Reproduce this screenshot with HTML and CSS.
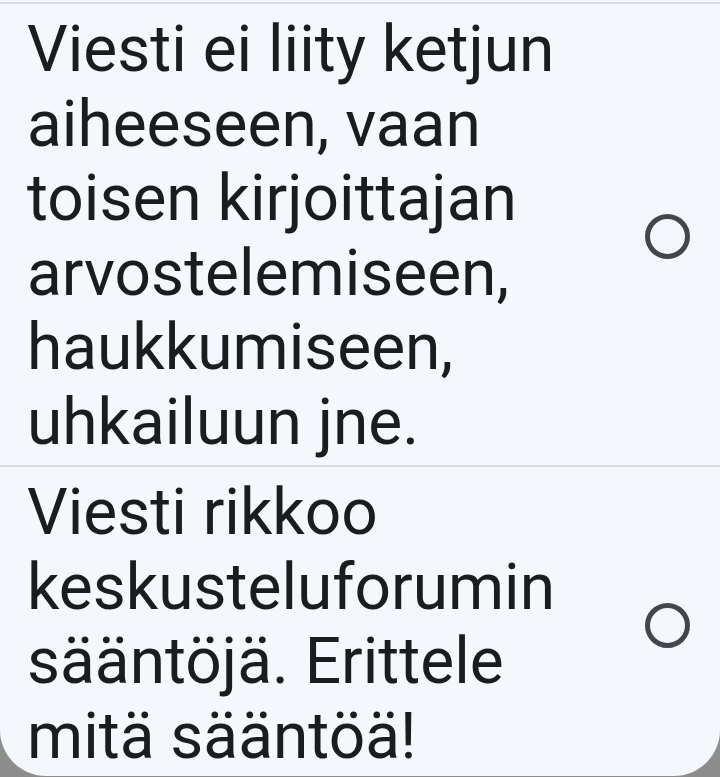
FILE: index.html
```html
<!DOCTYPE html>
<html lang="fi">
<head>
<meta charset="utf-8">
<link rel="stylesheet" href="styles.css">
</head>
<body>
<div class="panel">
  <div class="list">
    <label class="option">
      <span class="text">Viesti ei liity ketjun aiheeseen, vaan toisen kirjoittajan arvostelemiseen, haukkumiseen, uhkailuun jne.</span>
      <span class="radio"></span>
    </label>
    <label class="option">
      <span class="text">Viesti rikkoo keskusteluforumin sääntöjä. Erittele mitä sääntöä!</span>
      <span class="radio"></span>
    </label>
  </div>
</div>
</body>
</html>
```
FILE: styles.css
```css
html, body {
  margin: 0;
  padding: 0;
}
body {
  width: 720px;
  height: 777px;
  overflow: hidden;
  background: linear-gradient(180deg, #a6a6a6 0%, #8c8c8c 100%);
  font-family: Roboto, "Noto Sans", sans-serif;
}
.panel {
  box-sizing: border-box;
  height: 776px;
  padding-top: 2px;
  background: #f4f8fc;
  border-radius: 0 0 46px 46px;
  overflow: hidden;
}
.list {
  display: flex;
  flex-direction: column;
  height: 100%;
  border-top: 2px solid #d7dce1;
}
.option {
  display: flex;
  align-items: center;
  justify-content: space-between;
  padding: 9px 30px 5px 27px;
}
.option + .option {
  border-top: 2px solid #d7dce1;
  flex: 1;
}
.text {
  width: 583px;
  font-size: 64px;
  line-height: 74.5px;
  color: #1a1c1e;
}
.radio {
  box-sizing: border-box;
  width: 45px;
  height: 45px;
  border: 5px solid #43474b;
  border-radius: 50%;
  flex: none;
}
```
